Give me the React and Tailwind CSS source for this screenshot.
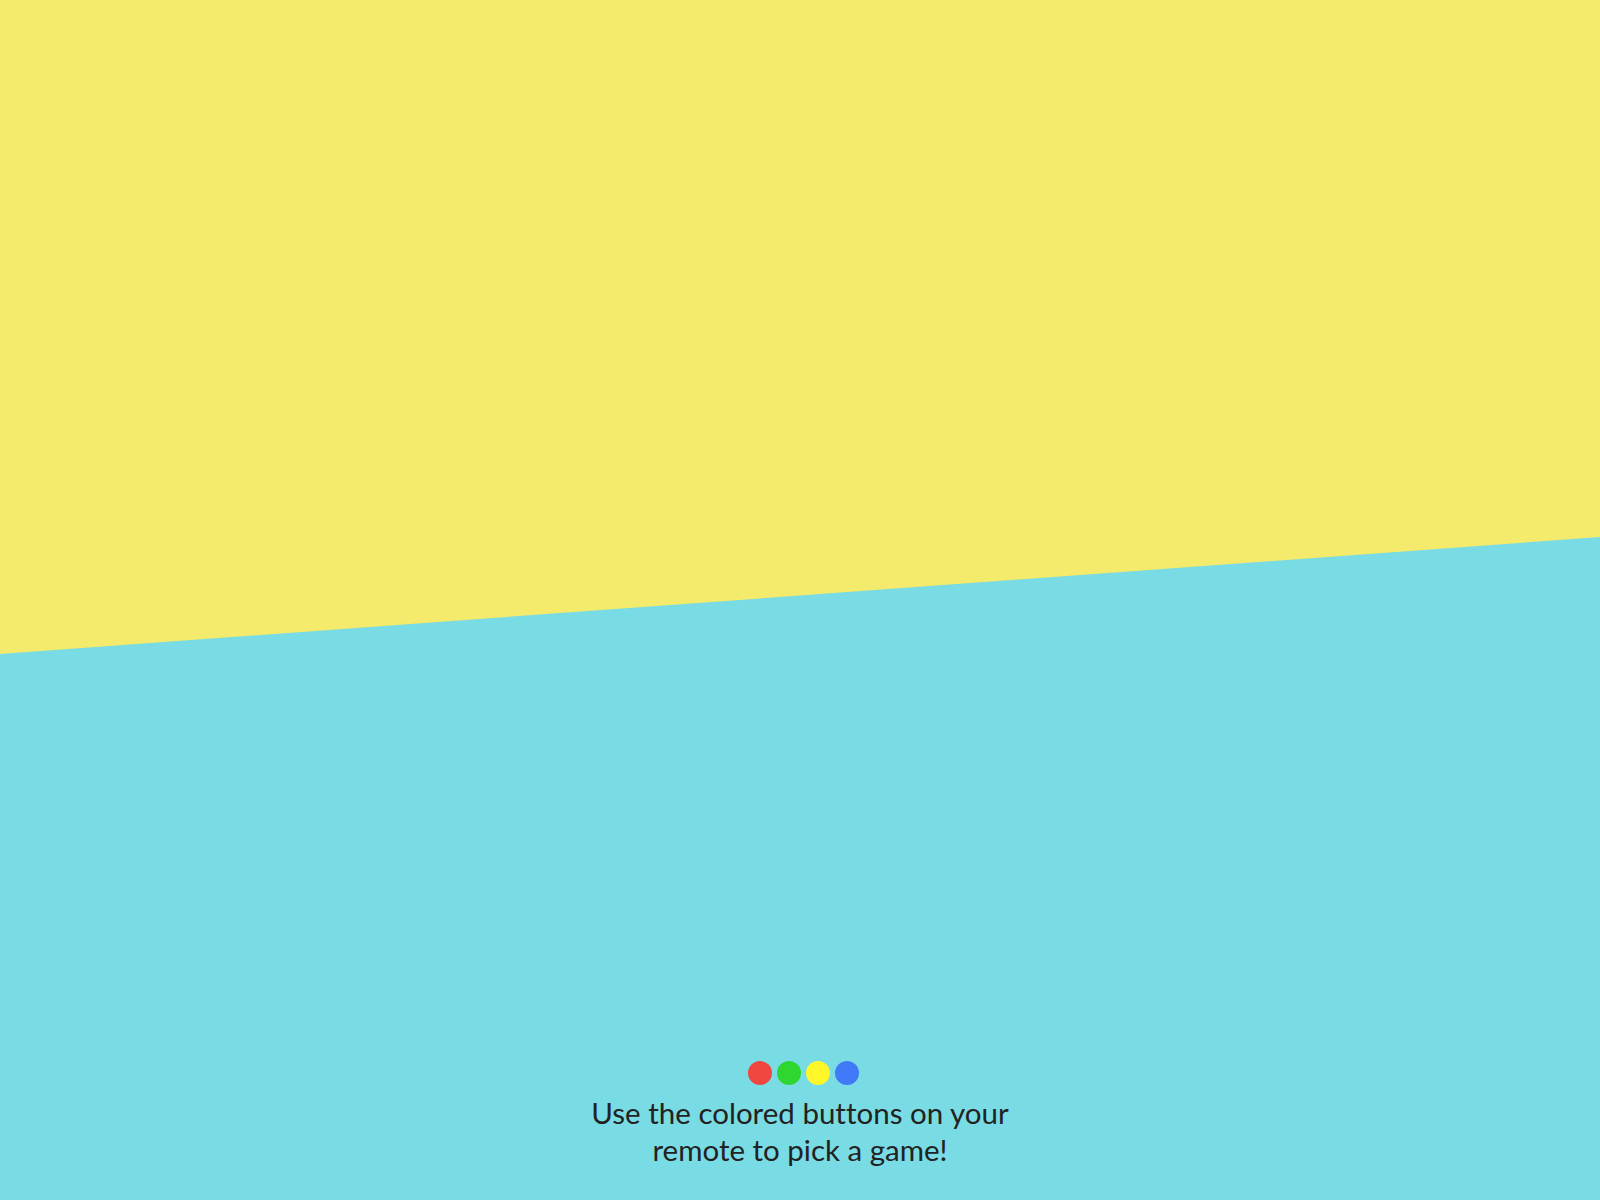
import React from 'react';

const buttons = ['bg-[#f04641]', 'bg-[#2fd62f]', 'bg-[#fff62a]', 'bg-[#407af8]'];

const App = () => {
    return (
        <div className="relative w-full h-[1200px] overflow-hidden bg-[#79dbe3] font-['Lato','Liberation_Sans',sans-serif]">
            <svg className="absolute inset-0 w-full h-full" viewBox="0 0 1600 1200" preserveAspectRatio="none">
                <polygon points="0,0 1600,0 1600,537 0,654" fill="#f4ea6c" />
            </svg>

            <div className="relative h-full flex flex-col items-center justify-end pb-[32px]">
                <div className="flex gap-[5px] mb-[9px] pl-[7px]">
                    {buttons.map((c) => (
                        <span key={c} className={`w-6 h-6 rounded-full ${c}`} />
                    ))}
                </div>
                <p className="text-[29.5px] leading-[37px] text-center text-[#222222] [font-variant-ligatures:none]">
                    Use the colored buttons on your
                    <br />
                    remote to pick a game!
                </p>
            </div>
        </div>
    );
};

export default App;
